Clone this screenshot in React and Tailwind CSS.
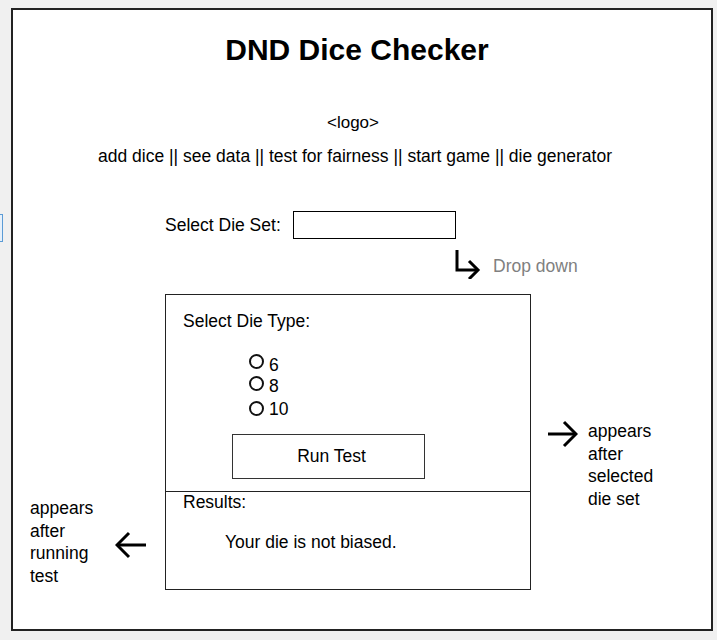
import React from "react";

function Radio({ label, circleMt, labelMt, h }) {
  return (
    <div className="flex items-start" style={{ height: h }}>
      <div className={`w-[15px] h-[15px] rounded-full border-2 border-[#111] ${circleMt}`} />
      <span className={`ml-[5px] leading-[20px] ${labelMt}`}>{label}</span>
    </div>
  );
}

export default function App() {
  return (
    <div
      className="relative w-[717px] h-[640px] bg-[#f0f0f0] overflow-hidden text-[17.5px] text-black"
      style={{ fontFamily: '"Liberation Sans", Arial, sans-serif' }}
    >
      <div className="absolute left-0 top-[214px] w-[3px] h-[28px] bg-[#e6f0fa] border-y border-r-[1.5px] border-[#5b9bd5]" />
      <div className="absolute left-[11px] top-[8px] w-[702px] h-[623px] bg-white border-2 border-[#222] flex flex-col">
        <h1 className="mt-[22px] pr-[10px] text-center font-bold text-[30px] leading-[36px]">
          DND Dice Checker
        </h1>
        <div className="mt-[43px] pr-[18px] text-center leading-[24px] text-[17px]">&lt;logo&gt;</div>
        <div className="mt-[9px] pr-[14px] text-center leading-[24px] text-[17.5px]">
          add dice || see data || test for fairness || start game || die generator
        </div>

        <div className="mt-[43px] pl-[152px] flex items-center h-[28px]">
          <span className="leading-[20px]">Select Die Set:</span>
          <div className="ml-[12px] w-[163px] h-[28px] border border-[#000]" />
        </div>

        <div className="mt-[10px] pl-[440px] flex items-start h-[30px]">
          <svg width="28" height="30" viewBox="0 0 28 30" fill="none" stroke="#000" strokeWidth="3">
            <path d="M4 1 V21 H24" />
            <path d="M16 12 L25 21 L16 30" />
          </svg>
          <span className="ml-[12px] mt-[7px] leading-[20px] text-[#808080]">Drop down</span>
        </div>

        <div className="mt-[15px] flex items-start">
          <div className="w-[152px] flex items-center pl-[17px] mt-[203px]">
            <div className="w-[85px] leading-[22.7px]">
              appears<br />after<br />running<br />test
            </div>
            <svg width="32" height="28" viewBox="0 0 32 28" fill="none" stroke="#000" strokeWidth="3" className="mt-[6px]">
              <path d="M2 14 H31" />
              <path d="M14 2 L2 14 L14 26" />
            </svg>
          </div>

          <div className="w-[366px] h-[296px] border border-[#222] flex flex-col">
            <div className="h-[196px] flex flex-col pl-[17px]">
              <div className="mt-[14px] leading-[24px]">Select Die Type:</div>
              <div className="mt-[21px] ml-[66px] flex flex-col">
                <Radio label="6" circleMt="mt-0" labelMt="mt-[1px]" h="22px" />
                <Radio label="8" circleMt="mt-0" labelMt="mt-0" h="23px" />
                <Radio label="10" circleMt="mt-[2px]" labelMt="mt-0" h="20px" />
              </div>
              <div className="mt-[15px] ml-[49px] w-[193px] h-[45px] pl-[6px] pb-[2px] border-[1.5px] border-[#333] flex items-center justify-center leading-[20px]">
                Run Test
              </div>
            </div>
            <div className="flex-1 border-t-[1.5px] border-[#222] pl-[17px]">
              <div className="leading-[20px]">Results:</div>
              <div className="mt-[20px] pl-[42px] leading-[20px]">Your die is not biased.</div>
            </div>
          </div>

          <div className="flex items-start mt-[126px] ml-[17px]">
            <svg width="30" height="28" viewBox="0 0 30 28" fill="none" stroke="#000" strokeWidth="3">
              <path d="M0 14 H28" />
              <path d="M16 2 L28 14 L16 26" />
            </svg>
            <div className="ml-[10px] leading-[22.5px]">
              appears<br />after<br />selected<br />die set
            </div>
          </div>
        </div>
      </div>
    </div>
  );
}
